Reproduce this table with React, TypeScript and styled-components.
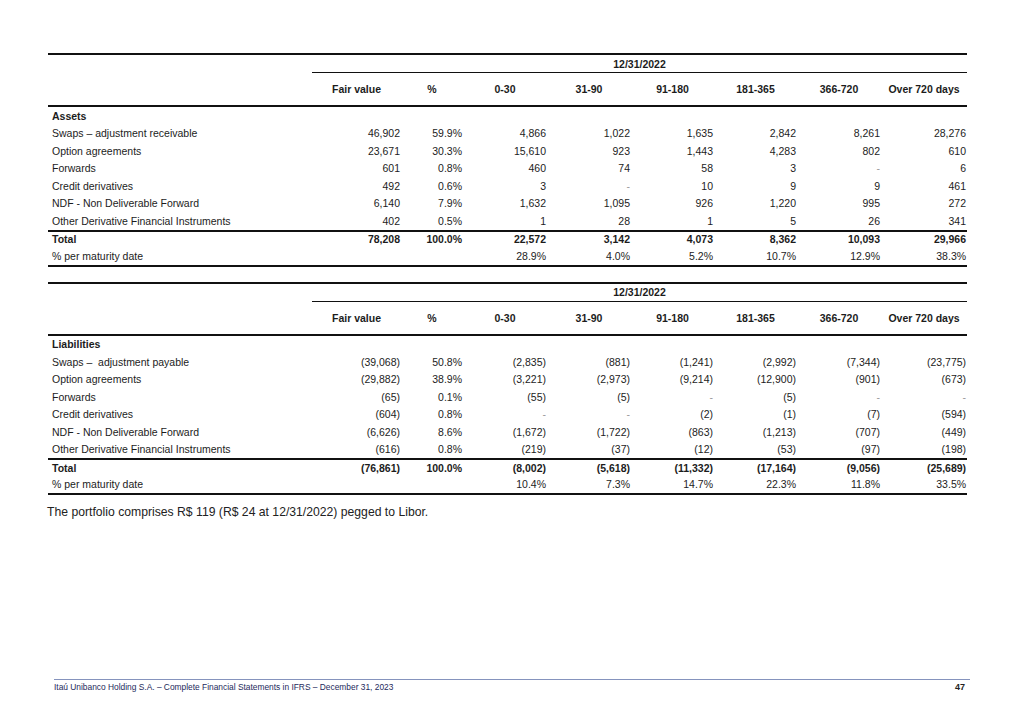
import React from 'react';
import styled, { createGlobalStyle } from 'styled-components';

const Global = createGlobalStyle`
  html, body { margin: 0; padding: 0; background: #ffffff; }
  body { font-family: "Liberation Sans", Arial, sans-serif; color: #1c1c1c; }
`;

const Page = styled.div`
  width: 1019px;
  height: 720px;
  box-sizing: border-box;
  padding: 53px 52px 28px 48px;
  display: flex;
  flex-direction: column;
`;

const Table = styled.table`
  width: 919px;
  table-layout: fixed;
  border-collapse: separate;
  border-spacing: 0;
  border-top: 2px solid #111;
  border-bottom: 2px solid #111;
  font-size: 10.5px;
  & + & { margin-top: 15px; }
`;

const DateCell = styled.th<{ $ruled?: boolean }>`
  height: 17px;
  padding: 0;
  text-align: center;
  font-weight: bold;
  vertical-align: middle;
  border-bottom: ${p => (p.$ruled ? '1px solid #111' : 'none')};
`;

const HeadCell = styled.th`
  height: 32px;
  padding: 0;
  text-align: center;
  font-weight: bold;
  vertical-align: middle;
  border-bottom: 2px solid #111;
`;

const Cell = styled.td<{ $num?: boolean; $bold?: boolean; $top?: boolean; $faint?: boolean }>`
  height: ${p => (p.$top ? '15.5px' : '17.5px')};
  padding: 0 ${p => (p.$num ? '1px' : '0')} 0 ${p => (p.$num ? '0' : '4px')};
  text-align: ${p => (p.$num ? 'right' : 'left')};
  font-weight: ${p => (p.$bold ? 'bold' : 'normal')};
  color: ${p => (p.$faint ? '#9a9a9a' : '#1c1c1c')};
  vertical-align: middle;
  white-space: pre;
  border-top: ${p => (p.$top ? '2px solid #111' : 'none')};
`;

const Caption = styled.p`
  margin: 10px 0 0 -1px;
  font-family: "Liberation Sans", Arial, sans-serif;
  font-size: 12.2px;
  color: #222;
`;

const Footer = styled.div`
  margin: auto 0 0 6px;
  width: 916px;
  border-top: 1.5px solid #8593bd;
  padding: 2px 5px 0 0;
  box-sizing: border-box;
  display: flex;
  justify-content: space-between;
  align-items: center;
  color: #1d2a5c;
`;

const FooterText = styled.span`
  font-size: 8.4px;
`;

const PageNo = styled.span`
  font-size: 9px;
  font-weight: bold;
  color: #222;
`;

const widths = [264, 89, 62, 84, 84, 83, 83, 84, 86];
const heads = ['Fair value', '%', '0-30', '31-90', '91-180', '181-365', '366-720', 'Over 720 days'];

type Row = [string, ...string[]];

const assets: Row[] = [
  ['Swaps – adjustment receivable', '46,902', '59.9%', '4,866', '1,022', '1,635', '2,842', '8,261', '28,276'],
  ['Option agreements', '23,671', '30.3%', '15,610', '923', '1,443', '4,283', '802', '610'],
  ['Forwards', '601', '0.8%', '460', '74', '58', '3', '-', '6'],
  ['Credit derivatives', '492', '0.6%', '3', '-', '10', '9', '9', '461'],
  ['NDF - Non Deliverable Forward', '6,140', '7.9%', '1,632', '1,095', '926', '1,220', '995', '272'],
  ['Other Derivative Financial Instruments', '402', '0.5%', '1', '28', '1', '5', '26', '341'],
];
const assetTotal: Row = ['Total', '78,208', '100.0%', '22,572', '3,142', '4,073', '8,362', '10,093', '29,966'];
const assetPct: Row = ['% per maturity date', '', '', '28.9%', '4.0%', '5.2%', '10.7%', '12.9%', '38.3%'];

const liabs: Row[] = [
  ['Swaps –  adjustment payable', '(39,068)', '50.8%', '(2,835)', '(881)', '(1,241)', '(2,992)', '(7,344)', '(23,775)'],
  ['Option agreements', '(29,882)', '38.9%', '(3,221)', '(2,973)', '(9,214)', '(12,900)', '(901)', '(673)'],
  ['Forwards', '(65)', '0.1%', '(55)', '(5)', '-', '(5)', '-', '-'],
  ['Credit derivatives', '(604)', '0.8%', '-', '-', '(2)', '(1)', '(7)', '(594)'],
  ['NDF - Non Deliverable Forward', '(6,626)', '8.6%', '(1,672)', '(1,722)', '(863)', '(1,213)', '(707)', '(449)'],
  ['Other Derivative Financial Instruments', '(616)', '0.8%', '(219)', '(37)', '(12)', '(53)', '(97)', '(198)'],
];
const liabTotal: Row = ['Total', '(76,861)', '100.0%', '(8,002)', '(5,618)', '(11,332)', '(17,164)', '(9,056)', '(25,689)'];
const liabPct: Row = ['% per maturity date', '', '', '10.4%', '7.3%', '14.7%', '22.3%', '11.8%', '33.5%'];

function DataRow({ row, bold, top }: { row: Row; bold?: boolean; top?: boolean }) {
  return (
    <tr>
      {row.map((v, i) => (
        <Cell key={i} $num={i > 0} $bold={bold} $top={top} $faint={v === '-'}>
          {v}
        </Cell>
      ))}
    </tr>
  );
}

function MaturityTable({ section, rows, total, pct }: { section: string; rows: Row[]; total: Row; pct: Row }) {
  return (
    <Table>
      <colgroup>
        {widths.map((w, i) => (
          <col key={i} style={{ width: w }} />
        ))}
      </colgroup>
      <thead>
        <tr>
          <DateCell />
          <DateCell colSpan={8} $ruled>
            12/31/2022
          </DateCell>
        </tr>
        <tr>
          <HeadCell />
          {heads.map(h => (
            <HeadCell key={h}>{h}</HeadCell>
          ))}
        </tr>
      </thead>
      <tbody>
        <tr>
          <Cell $bold colSpan={9}>{section}</Cell>
        </tr>
        {rows.map((r, i) => (
          <DataRow key={i} row={r} />
        ))}
        <DataRow row={total} bold top />
        <DataRow row={pct} />
      </tbody>
    </Table>
  );
}

export default function App() {
  return (
    <>
      <Global />
      <Page>
        <MaturityTable section="Assets" rows={assets} total={assetTotal} pct={assetPct} />
        <MaturityTable section="Liabilities" rows={liabs} total={liabTotal} pct={liabPct} />
        <Caption>The portfolio comprises R$ 119 (R$ 24 at 12/31/2022) pegged to Libor.</Caption>
        <Footer>
          <FooterText>Itaú Unibanco Holding S.A. – Complete Financial Statements in IFRS – December 31, 2023</FooterText>
          <PageNo>47</PageNo>
        </Footer>
      </Page>
    </>
  );
}
